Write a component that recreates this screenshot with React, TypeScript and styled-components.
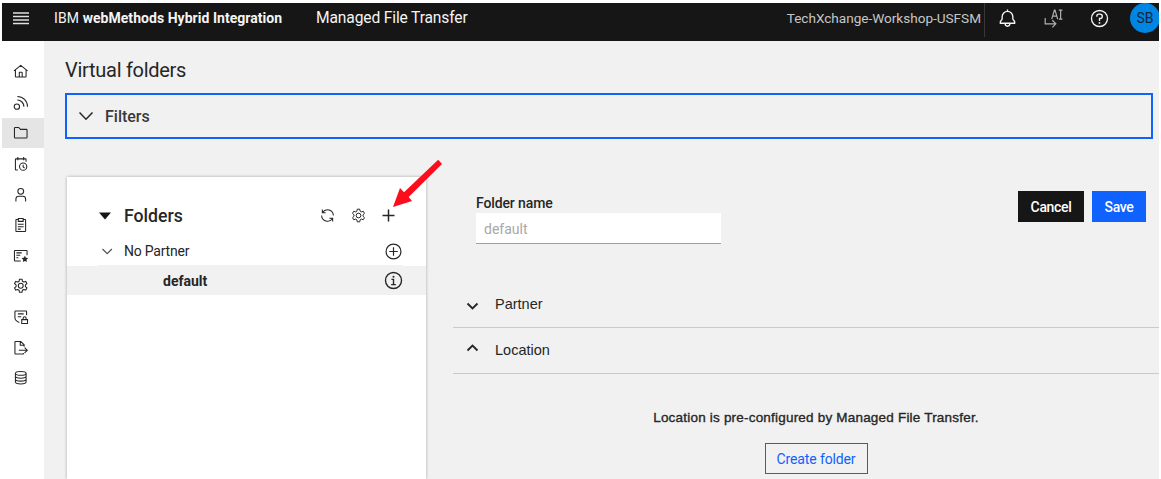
import React from "react";
import styled, { createGlobalStyle } from "styled-components";

const Global = createGlobalStyle`
  * { box-sizing: border-box; }
  body { margin: 0; background: #fff; overflow: hidden; }
  button, input { font: inherit; border-radius: 0; margin: 0; }
`;

const sans = `Roboto, "Liberation Sans", sans-serif`;

const Page = styled.div`
  height: 479px;
  padding: 3px 2px 0;
  display: flex;
  flex-direction: column;
  font-family: ${sans};
  color: #262626;
  overflow: hidden;
`;

const Header = styled.header`
  flex: 0 0 38px;
  display: flex;
  align-items: flex-start;
  background: #161616;
  color: #f4f4f4;
  overflow: hidden;
  line-height: 31px;
  white-space: nowrap;
`;
const MenuButton = styled.div`
  width: 52px;
  height: 31px;
  padding: 8px 0 0 11px;
  line-height: 0;
`;
const Brand = styled.div`
  width: 262px;
  font-size: 14px;
  letter-spacing: 0.1px;
  b { font-weight: 700; letter-spacing: 0.04px; }
`;
const Product = styled.div`
  flex: 1;
  font-size: 15.6px;
  letter-spacing: -0.14px;
`;
const Tenant = styled.div`
  height: 34px;
  padding-right: 3px;
  border-right: 1px solid #393939;
  font-size: 13.6px;
  letter-spacing: -0.02px;
  color: #c6c6c6;
`;
const HeaderAction = styled.div`
  width: 46px;
  height: 31px;
  padding-right: 1px;
  display: flex;
  align-items: center;
  justify-content: center;
`;
const Avatar = styled.div`
  width: 30px;
  height: 30px;
  margin: 0 -1px 0 7px;
  border-radius: 50%;
  background: #0085e3;
  color: #10263c;
  font-size: 14px;
  line-height: 31px;
  text-align: center;
`;

const Body = styled.div`
  flex: 1;
  display: flex;
  min-height: 0;
`;
const Nav = styled.nav`
  flex: 0 0 42px;
  padding-top: 15.7px;
  background: #fff;
`;
const NavItem = styled.div<{ $active?: boolean }>`
  height: 30.6px;
  padding-right: 4.5px;
  display: flex;
  align-items: center;
  justify-content: center;
  background: ${(p) => (p.$active ? "#e5e5e5" : "transparent")};
`;
const Main = styled.main`
  flex: 1;
  min-width: 0;
  padding-left: 21px;
  background: #f1f1f1;
`;
const Title = styled.h1`
  margin: 0;
  height: 52px;
  padding-top: 14px;
  font-size: 20px;
  font-weight: 400;
  line-height: 30px;
  letter-spacing: -0.28px;
`;
const Filters = styled.div`
  height: 46px;
  margin-right: 6px;
  padding: 1px 0 0 12px;
  display: flex;
  align-items: center;
  gap: 11px;
  border: 2px solid #0f62fe;
  font-size: 16px;
  font-weight: 500;
  color: #393939;
`;
const Split = styled.div`
  display: flex;
  margin: 38px 0 0 2px;
  height: 302px;
`;
const Panel = styled.section`
  width: 359px;
  background: #fff;
  box-shadow: 0 0 3px rgba(0, 0, 0, 0.3);
`;
const TreeHeader = styled.div`
  height: 60px;
  padding: 17px 31px 0 32px;
  display: flex;
  align-items: center;
`;
const TreeTitle = styled.h2`
  margin: 0 0 0 13px;
  flex: 1;
  font-size: 17.7px;
  font-weight: 500;
`;
const TreeTools = styled.div`
  display: flex;
  align-items: center;
  gap: 16px;
`;
const PartnerRow = styled.div`
  height: 29px;
  margin: 0 23px 0 31px;
  padding-right: 1px;
  display: flex;
  align-items: center;
  border-bottom: 1px solid #f1f1f1;
  font-size: 14px;
`;
const PartnerName = styled.span`
  flex: 1;
  margin-left: 8px;
  letter-spacing: -0.22px;
`;
const FolderRow = styled.div`
  height: 29px;
  padding: 0 23px 0 96px;
  display: flex;
  align-items: center;
  justify-content: space-between;
  background: #f1f1f1;
  font-size: 14px;
  font-weight: 700;
`;

const Detail = styled.section`
  flex: 1;
  margin-left: 27px;
`;
const FormRow = styled.div`
  height: 105px;
  padding: 14px 13px 0 23px;
  display: flex;
  justify-content: space-between;
`;
const Field = styled.label`
  width: 245px;
  padding-top: 2px;
  font-size: 14px;
  font-weight: 500;
  line-height: 20px;
  letter-spacing: -0.12px;
`;
const Input = styled.input`
  display: block;
  width: 245px;
  height: 31px;
  padding: 1px 8px 0;
  border: 0;
  border-bottom: 1px solid #a0a0a0;
  background: #fff;
  font-size: 14px;
  font-weight: 400;
  &::placeholder { color: #a8a8a8; opacity: 1; }
`;
const Actions = styled.div`
  display: flex;
  gap: 8px;
`;
const Button = styled.button<{ $kind: "dark" | "primary" | "outline" }>`
  height: 31px;
  width: ${(p) => ({ dark: 66, primary: 54, outline: 103 })[p.$kind]}px;
  padding: 0;
  border: 1px solid ${(p) => (p.$kind === "dark" ? "#161616" : "#0f62fe")};
  background: ${(p) => ({ dark: "#161616", primary: "#0f62fe", outline: "transparent" })[p.$kind]};
  color: ${(p) => (p.$kind === "outline" ? "#0f62fe" : "#fff")};
  font-size: 14px;
  font-weight: ${(p) => (p.$kind === "outline" ? 400 : 500)};
  letter-spacing: ${(p) => (p.$kind === "outline" ? -0.12 : -0.35)}px;
`;
const Section = styled.div`
  height: 46px;
  padding: 0 0 2px 13px;
  display: flex;
  align-items: center;
  gap: 16px;
  border-bottom: 1px solid #cacaca;
  font-family: "Liberation Sans", Arial, sans-serif;
  font-size: 14.5px;
`;
const Caret = styled.svg<{ $open?: boolean }>`
  margin-top: ${(p) => (p.$open ? "-4px" : "5px")};
`;
const Notice = styled.div`
  padding: 35px 0 0 20px;
  display: flex;
  flex-direction: column;
  align-items: center;
  gap: 16px;
`;
const NoticeText = styled.p`
  margin: 0;
  font-family: "Liberation Sans", Arial, sans-serif;
  font-size: 13.5px;
  line-height: 18px;
  letter-spacing: 0.2px;
  -webkit-text-stroke: 0.35px #262626;
`;
const Pointer = styled.svg`
  position: absolute;
  left: 388px;
  top: 156px;
`;

const Icon = ({ size = 15, color = "#262626", width = 2, children }: {
  size?: number; color?: string; width?: number; children: React.ReactNode;
}) => (
  <svg width={size} height={size} viewBox="0 0 32 32" fill="none" stroke={color} strokeWidth={width}>
    {children}
  </svg>
);

const gear = (
  <>
    <circle cx="16" cy="16" r="5" />
    <path d="M13.400 2.500h5.200l.9 4.300 2.600 1.500 4.100-1.300 2.600 4.500-3.200 2.900v3.200l3.200 2.900-2.600 4.500-4.100-1.300-2.600 1.500-.9 4.300h-5.200l-.9-4.300-2.600-1.500-4.100 1.300-2.600-4.500 3.200-2.900v-3.200l-3.200-2.900 2.600-4.500 4.100 1.300 2.600-1.500z" strokeLinejoin="round" />
  </>
);

const navIcons: { name: string; art: React.ReactNode }[] = [
  { name: "home", art: <path d="M2 14.200 16 3l14 11.200M5 12v14a1 1 0 0 0 1 1h20a1 1 0 0 0 1-1V12M13 27V18a1 1 0 0 1 1-1h4a1 1 0 0 1 1 1v9" /> },
  { name: "feeds", art: <><circle cx="8" cy="24" r="5.500" /><path d="M9 10.500A13.500 13.500 0 0 1 22.500 24M9 3a21 21 0 0 1 21 21" /></> },
  { name: "folders", art: <path d="M3 6.500A1.500 1.500 0 0 1 4.500 5h7.100l4 4H27.500A1.500 1.500 0 0 1 29 10.500v15a1.500 1.500 0 0 1-1.500 1.500h-23A1.500 1.500 0 0 1 3 25.500z" /> },
  { name: "schedule", art: <><path d="M10 29H6a1 1 0 0 1-1-1V7a1 1 0 0 1 1-1h20a1 1 0 0 1 1 1v5M10 2v7M22 2v7M13 6h8" /><circle cx="21" cy="22" r="7.500" /><path d="M21 18v4.500l3 2.500" /></> },
  { name: "users", art: <><circle cx="16" cy="9" r="6" /><path d="M6 30v-5a6 6 0 0 1 6-6h8a6 6 0 0 1 6 6v5" /></> },
  { name: "reports", art: <path d="M11 5H7a1 1 0 0 0-1 1v23a1 1 0 0 0 1 1h18a1 1 0 0 0 1-1V6a1 1 0 0 0-1-1h-4M11 3h10v6H11zM10 15h12M10 20h12M10 25h6" /> },
  { name: "certificates", art: <><path d="M16 27H4a1 1 0 0 1-1-1V6a1 1 0 0 1 1-1h24a1 1 0 0 1 1 1v9M7 10h11M7 15h8M7 20h4" /><path d="m24.500 16 2.100 4.200 4.700.7-3.400 3.300.8 4.700-4.200-2.200-4.200 2.200.8-4.700-3.400-3.300 4.700-.7z" fill="#262626" stroke="none" /></> },
  { name: "settings", art: gear },
  { name: "policies", art: <path d="M13 28 8.500 25.500A8 8 0 0 1 4 18V5a1 1 0 0 1 1-1h22a1 1 0 0 1 1 1v8M10 10h12M10 16h7M18 22h12v8H18zM21 22v-3a3 3 0 0 1 6 0v3" /> },
  { name: "export", art: <path d="M22 27v1a1 1 0 0 1-1 1H5a1 1 0 0 1-1-1V4a1 1 0 0 1 1-1h11l7 7v4M15 3v8h8M12 21h17M24 15.500l5.500 5.500-5.500 5.500" /> },
  { name: "storage", art: <><ellipse cx="16" cy="7" rx="11" ry="4" /><path d="M5 7v18c0 2.200 5 4 11 4s11-1.800 11-4V7M5 13c0 2.200 5 4 11 4s11-1.800 11-4M5 19c0 2.200 5 4 11 4s11-1.800 11-4" /></> },
];

export default function App() {
  return (
    <Page>
      <Global />
      <Header>
        <MenuButton>
          <svg width="16" height="14" viewBox="0 0 16 14" stroke="#e0e0e0" strokeWidth="1.300">
            <path d="M0 2h16M0 5.500h16M0 9h16M0 12.500h16" />
          </svg>
        </MenuButton>
        <Brand>IBM <b>webMethods Hybrid Integration</b></Brand>
        <Product>Managed File Transfer</Product>
        <Tenant>TechXchange-Workshop-USFSM</Tenant>
        <HeaderAction>
          <Icon size={19} color="#f4f4f4" width={2.3}>
            <path d="M4 24v-3l3-4v-4a9 9 0 0 1 18 0v4l3 4v3zM12 24v1a4 4 0 0 0 8 0v-1M16 1v3" />
          </Icon>
        </HeaderAction>
        <HeaderAction>
          <Icon size={19} color="#b0b0b0">
            <path d="M2 15v10h17M14 19l6 6-6 6M13 17 17.500 2h1L23 17M14.500 12h7M25 2h6M28 2v15M25 17h6" />
          </Icon>
        </HeaderAction>
        <HeaderAction>
          <Icon size={19} color="#f4f4f4" width={2.2}>
            <circle cx="16" cy="16" r="13.500" />
            <path d="M11.500 13v-1a3.500 3.500 0 0 1 3.500-3.500h2a3.700 3.700 0 0 1 0 7.500h-1v4" />
            <circle cx="16" cy="23.500" r="1.500" fill="#f4f4f4" stroke="none" />
          </Icon>
        </HeaderAction>
        <Avatar>SB</Avatar>
      </Header>
      <Body>
        <Nav>
          {navIcons.map((n) => (
            <NavItem key={n.name} $active={n.name === "folders"}><Icon size={15.5} width={2.2}>{n.art}</Icon></NavItem>
          ))}
        </Nav>
        <Main>
          <Title>Virtual folders</Title>
          <Filters>
            <svg width="15" height="9" viewBox="0 0 15 9" fill="none" stroke="#262626" strokeWidth="1.500"><path d="m.5 .5 6.500 6.700L13.500.5" /></svg>
            Filters
          </Filters>
          <Split>
            <Panel>
              <TreeHeader>
                <svg width="12" height="8" viewBox="0 0 12 8" fill="#161616"><path d="M0 .5h12L6 7.500z" /></svg>
                <TreeTitle>Folders</TreeTitle>
                <TreeTools>
                  <Icon width={2.2}><path d="M12 10H5V3M5.500 9.500A12.500 12.500 0 0 1 28.500 16M20 22h7v7M26.500 22.500A12.500 12.500 0 0 1 3.500 16" /></Icon>
                  <Icon width={2.1}>{gear}</Icon>
                  <svg width="13" height="13" viewBox="0 0 13 13" stroke="#262626" strokeWidth="1.500"><path d="M6.500.5v12M.5 6.500h12" /></svg>
                </TreeTools>
              </TreeHeader>
              <PartnerRow>
                <svg width="18" height="7" viewBox="0 0 18 7" fill="none" stroke="#525252" strokeWidth="1.200"><path d="m4.500 1 4.700 4.700L13.900 1" /></svg>
                <PartnerName>No Partner</PartnerName>
                <Icon size={17} width={2.2}><circle cx="16" cy="16" r="14" /><path d="M16 8v16M8 16h16" /></Icon>
              </PartnerRow>
              <FolderRow>
                default
                <Icon size={19} width={2.3}><circle cx="16" cy="16" r="13.500" /><path d="M12.500 14H16v9M12 23h8" /><circle cx="16" cy="9.500" r="1.700" fill="#262626" stroke="none" /></Icon>
              </FolderRow>
            </Panel>
            <Detail>
              <FormRow>
                <Field>Folder name<Input placeholder="default" /></Field>
                <Actions>
                  <Button $kind="dark">Cancel</Button>
                  <Button $kind="primary">Save</Button>
                </Actions>
              </FormRow>
              <Section>
                <Caret width="13" height="8" viewBox="0 0 13 8" fill="none" stroke="#262626" strokeWidth="1.900"><path d="m1.500 1.500 5 5 5-5" /></Caret>
                Partner
              </Section>
              <Section>
                <Caret $open width="13" height="8" viewBox="0 0 13 8" fill="none" stroke="#262626" strokeWidth="1.900"><path d="m1.500 6.500 5-5 5 5" /></Caret>
                Location
              </Section>
              <Notice>
                <NoticeText>Location is pre-configured by Managed File Transfer.</NoticeText>
                <Button $kind="outline">Create folder</Button>
              </Notice>
            </Detail>
          </Split>
        </Main>
      </Body>
      <Pointer width="56" height="54" viewBox="0 0 56 54" fill="#fc0d1b">
        <path d="M50.200 3.800 54 8 20.700 41l3.300 4L5 51l7-19 4 4.300z" />
      </Pointer>
    </Page>
  );
}
